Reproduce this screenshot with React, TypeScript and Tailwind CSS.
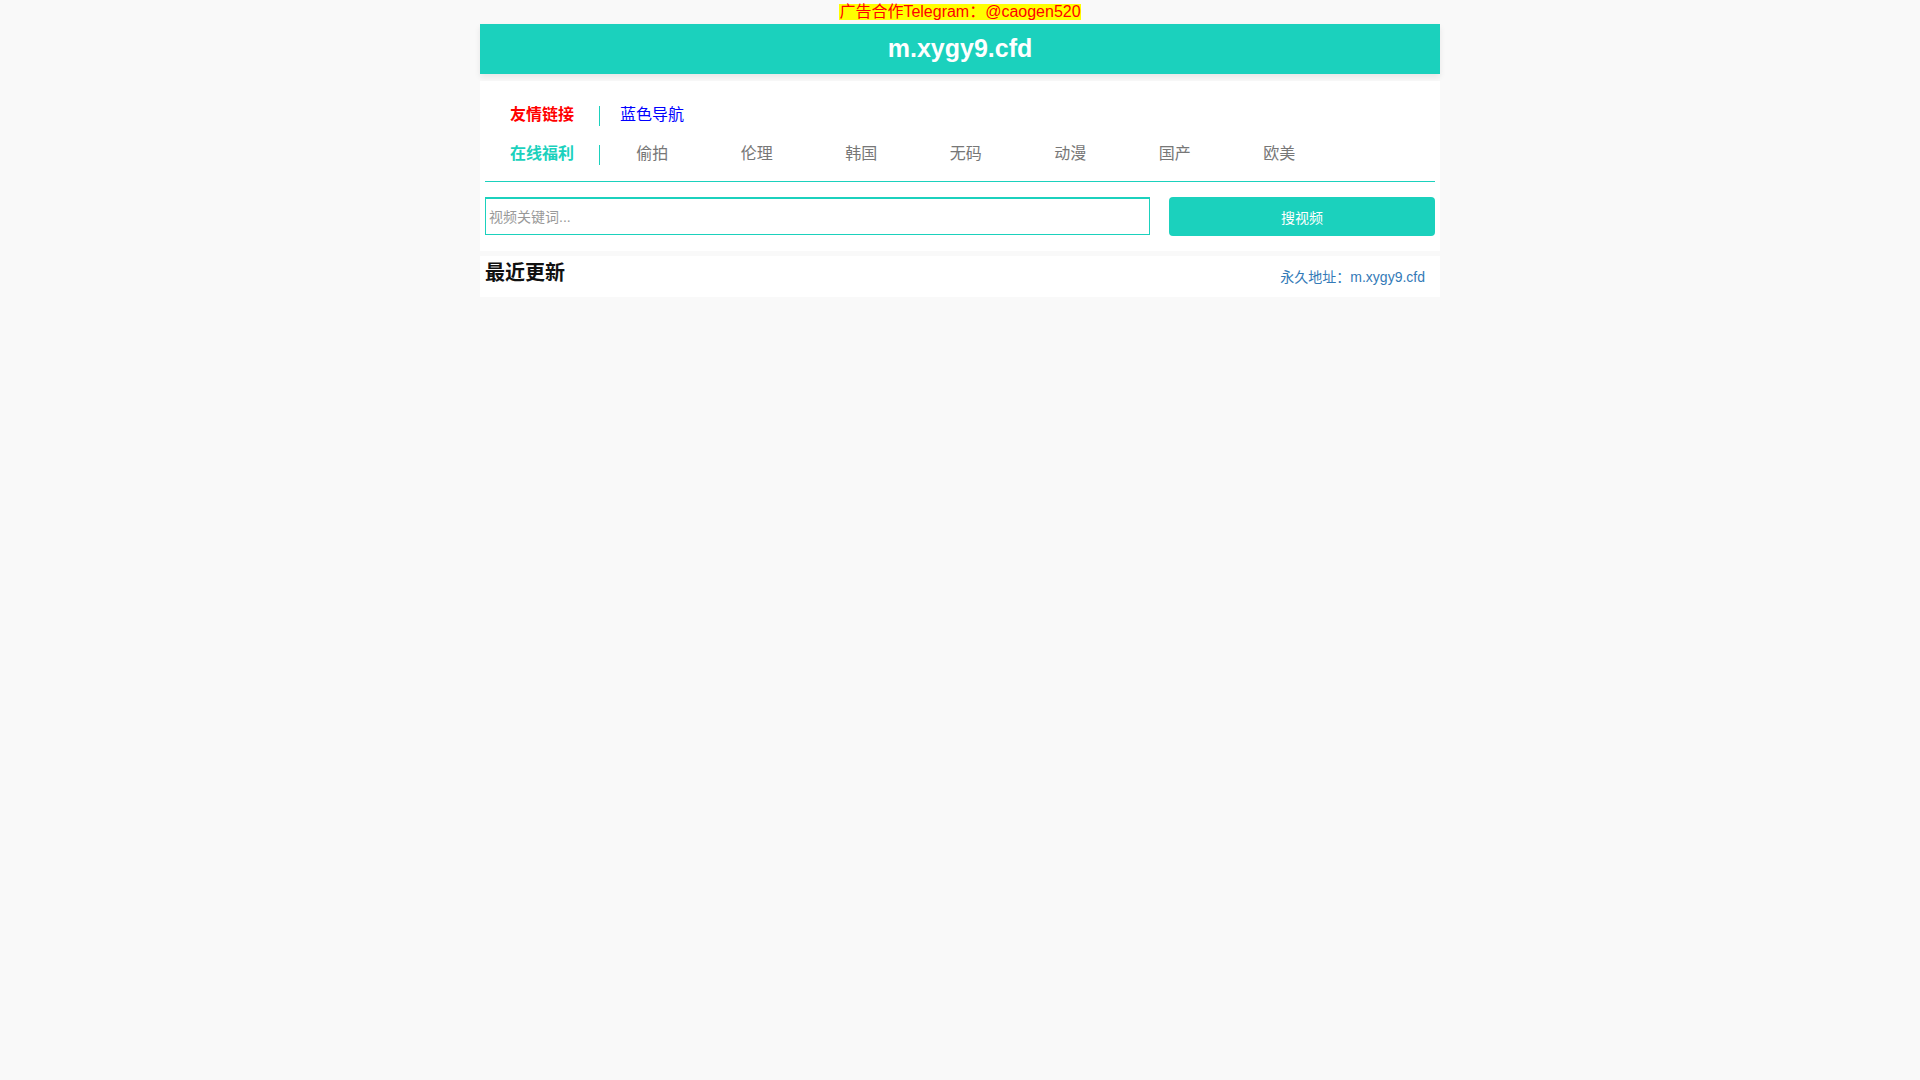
import React from "react";

const font = { fontFamily: '"Liberation Sans", Arial, "Noto Sans CJK SC", sans-serif' };

export default function App() {
  const items = ["偷拍", "伦理", "韩国", "无码", "动漫", "国产", "欧美"];
  return (
    <div className="min-h-[1080px] w-full bg-[#f9f9f9]" style={font}>
      <div className="h-[24px] flex items-center justify-center">
        <span className="bg-[#ffff00] text-[#ff0000] text-[16px] leading-[16px]">广告合作Telegram：@caogen520</span>
      </div>
      <div className="w-[960px] mx-auto">
        <div className="h-[50px] bg-[#1bd1bd] flex items-center justify-center shadow-[0_3px_6px_rgba(0,0,0,0.08)]">
          <span className="text-white font-bold text-[25px]">m.xygy9.cfd</span>
        </div>
        <div className="mt-[7px] bg-white px-[5px] pt-[14px] pb-[15px]">
          <div className="border-b border-[#1bd1bd] pb-[8px]">
            <div className="h-[39px] flex items-center">
              <div className="w-[114px] pl-[25px] text-[16px] font-bold text-[#ff0000]">友情链接</div>
              <div className="w-px h-[20px] bg-[#1bd1bd] mt-[2px]" />
              <div className="pl-[20px] text-[16px] text-[#0000ff]">蓝色导航</div>
            </div>
            <div className="h-[39px] flex items-center">
              <div className="w-[114px] pl-[25px] text-[16px] font-bold text-[#1bd1bd]">在线福利</div>
              <div className="w-px h-[20px] bg-[#1bd1bd] mt-[2px]" />
              {items.map((t) => (
                <div key={t} className="w-[104.5px] text-center text-[16px] text-[#777777]">{t}</div>
              ))}
            </div>
          </div>
          <div className="mt-[15px] flex items-start">
            <div className="w-[665px] h-[38px] border border-t-2 border-[#1bd1bd] flex items-center bg-white">
              <input
                className="w-full h-full px-[3px] text-[14px] text-[#333] outline-none placeholder:text-[#999]"
                placeholder="视频关键词..."
                style={font}
              />
            </div>
            <button className="ml-[19px] w-[266px] h-[39px] rounded-[4px] bg-[#1bd1bd] text-white text-[14px] pt-[3px]" style={font}>
              搜视频
            </button>
          </div>
        </div>
        <div className="mt-[5px] h-[41px] bg-white px-[5px] flex items-center justify-between">
          <span className="text-[20px] font-bold text-[#111] mb-[7px]">最近更新</span>
          <span className="text-[14px] text-[#337ab7] pr-[10px] pt-[2px]">永久地址：m.xygy9.cfd</span>
        </div>
      </div>
    </div>
  );
}
